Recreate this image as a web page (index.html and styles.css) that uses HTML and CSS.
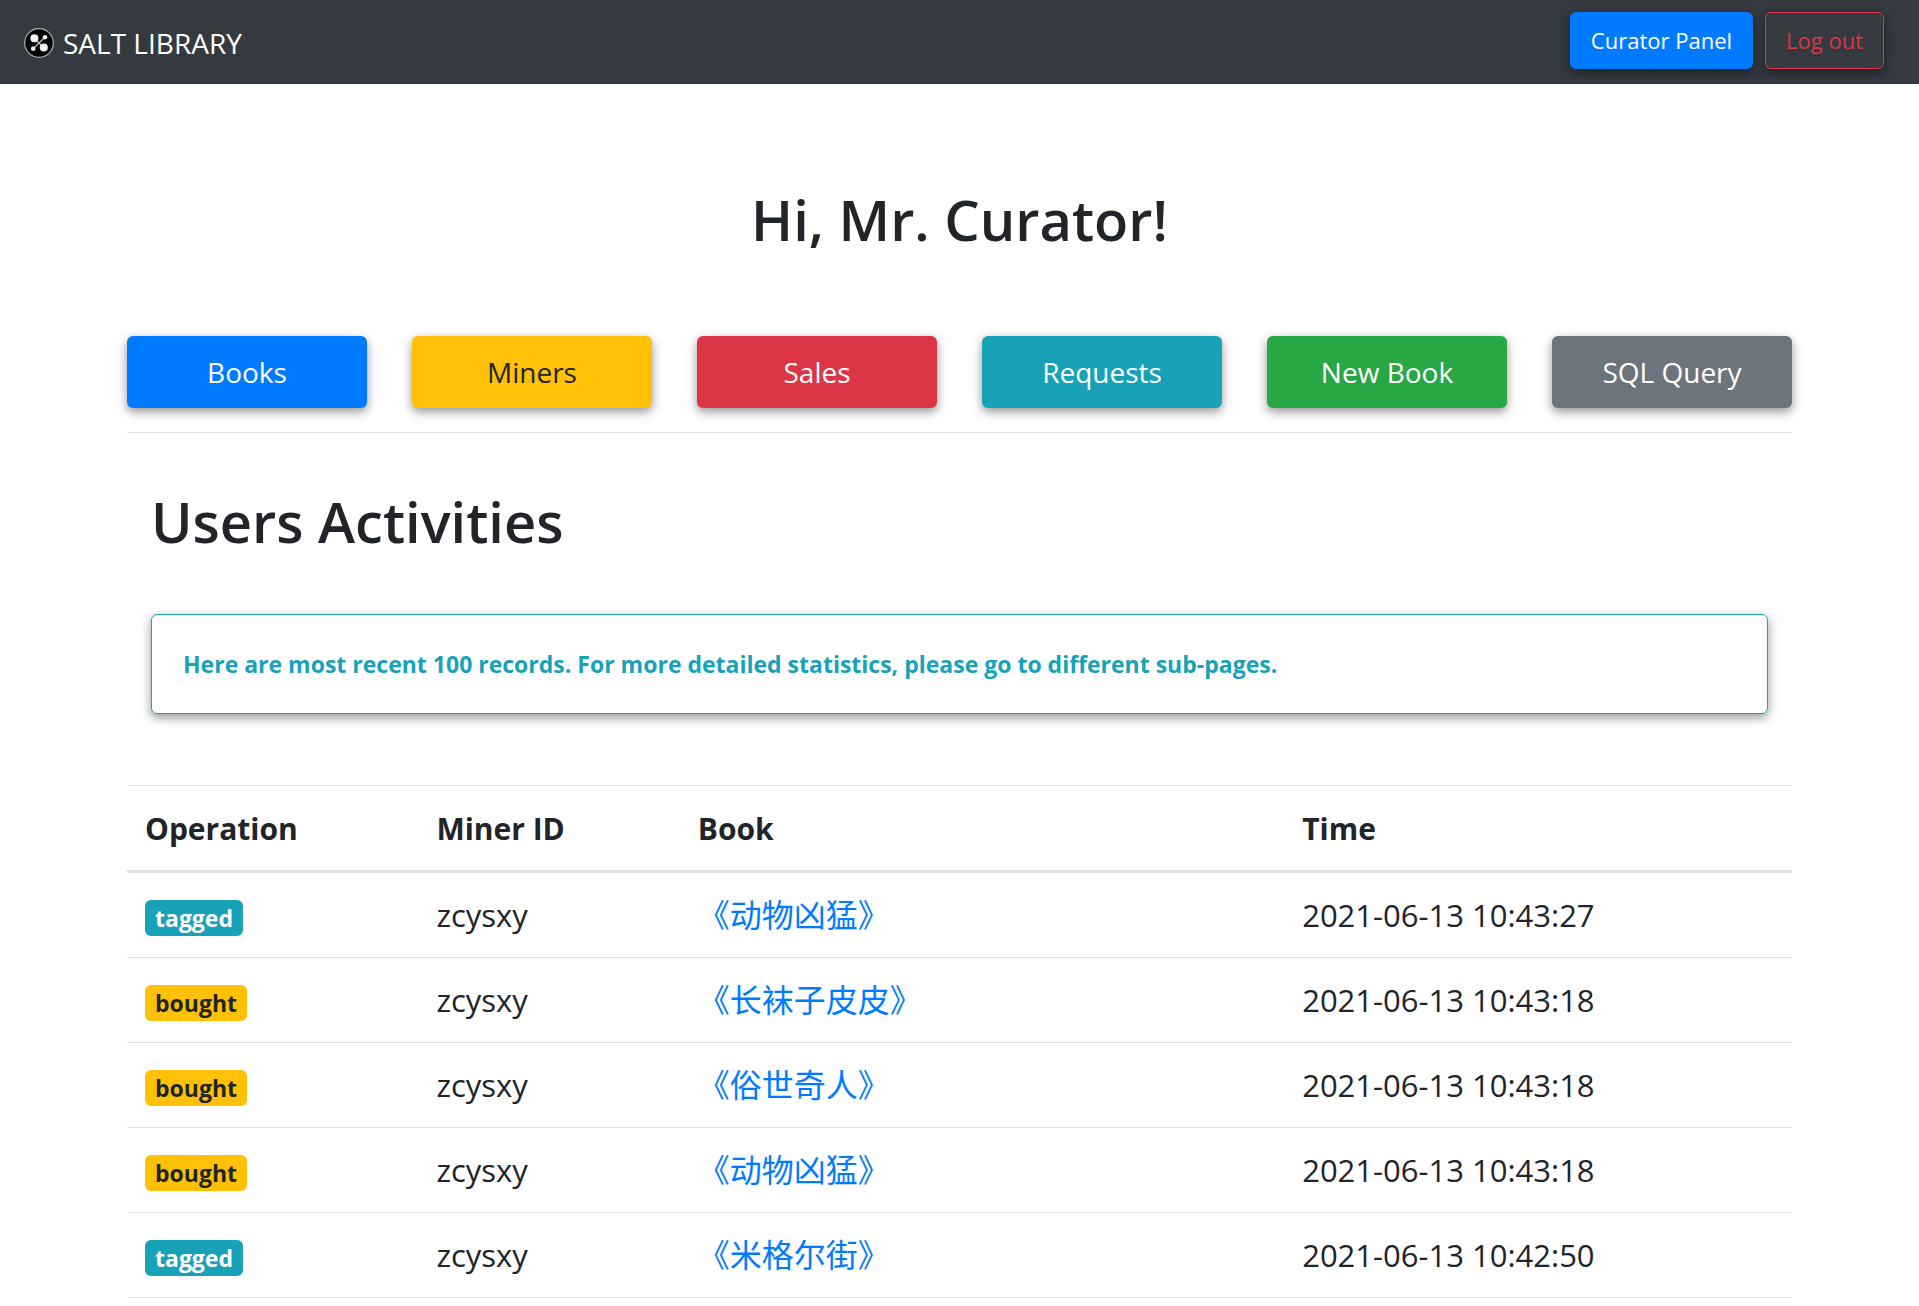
FILE: index.html
```html
<!DOCTYPE html>
<html lang="en">
<head>
  <meta charset="utf-8">
  <meta name="viewport" content="width=device-width, initial-scale=1">
  <title>Salt Library</title>
  <link rel="stylesheet" href="styles.css">
</head>
<body>
  <header class="navbar">
    <a class="brand" href="#">
      <svg class="brand-logo" viewBox="0 0 30 30" aria-hidden="true">
        <circle cx="15" cy="15" r="14.3" fill="#000" stroke="#a9adb0" stroke-width="1.2"/>
        <path d="M10.5 10.5 19.5 19.5M20.8 9.3 9.2 20.8" stroke="#b9bdbd" stroke-width="1.3"/>
        <circle cx="10.4" cy="10.2" r="4" fill="#f1f5f4"/>
        <circle cx="19.8" cy="19.6" r="4" fill="#f1f5f4"/>
        <circle cx="21" cy="9.2" r="2.3" fill="#f1f5f4"/>
        <circle cx="9.2" cy="20.8" r="2.3" fill="#f1f5f4"/>
      </svg>
      <span>SALT LIBRARY</span>
    </a>
    <nav class="actions">
      <button class="btn btn-primary" type="button">Curator Panel</button>
      <button class="btn btn-outline-danger" type="button">Log out</button>
    </nav>
  </header>

  <main class="container">
    <h1 class="title greeting">Hi, Mr. Curator!</h1>

    <div class="tiles">
      <button class="btn btn-lg btn-primary" type="button">Books</button>
      <button class="btn btn-lg btn-warning" type="button">Miners</button>
      <button class="btn btn-lg btn-danger" type="button">Sales</button>
      <button class="btn btn-lg btn-info" type="button">Requests</button>
      <button class="btn btn-lg btn-success" type="button">New Book</button>
      <button class="btn btn-lg btn-secondary" type="button">SQL Query</button>
    </div>

    <section class="activities">
      <h2 class="title">Users Activities</h2>
      <p class="notice">Here are most recent 100 records. For more detailed statistics, please go to different sub-pages.</p>
    </section>

    <table class="records">
      <thead>
        <tr>
          <th class="col-operation" scope="col">Operation</th>
          <th class="col-miner" scope="col">Miner ID</th>
          <th class="col-book" scope="col">Book</th>
          <th scope="col">Time</th>
        </tr>
      </thead>
      <tbody>
        <tr>
          <td><span class="badge badge-info">tagged</span></td>
          <td>zcysxy</td>
          <td><a class="book" lang="zh-CN" href="#">《动物凶猛》</a></td>
          <td>2021-06-13 10:43:27</td>
        </tr>
        <tr>
          <td><span class="badge badge-warning">bought</span></td>
          <td>zcysxy</td>
          <td><a class="book" lang="zh-CN" href="#">《长袜子皮皮》</a></td>
          <td>2021-06-13 10:43:18</td>
        </tr>
        <tr>
          <td><span class="badge badge-warning">bought</span></td>
          <td>zcysxy</td>
          <td><a class="book" lang="zh-CN" href="#">《俗世奇人》</a></td>
          <td>2021-06-13 10:43:18</td>
        </tr>
        <tr>
          <td><span class="badge badge-warning">bought</span></td>
          <td>zcysxy</td>
          <td><a class="book" lang="zh-CN" href="#">《动物凶猛》</a></td>
          <td>2021-06-13 10:43:18</td>
        </tr>
        <tr>
          <td><span class="badge badge-info">tagged</span></td>
          <td>zcysxy</td>
          <td><a class="book" lang="zh-CN" href="#">《米格尔街》</a></td>
          <td>2021-06-13 10:42:50</td>
        </tr>
      </tbody>
    </table>
  </main>
</body>
</html>
```
FILE: styles.css
```css
:root {
  --dark: #343a40;
  --text: #212529;
  --line: #dee2e6;
  --blue: #007bff;
  --yellow: #ffc107;
  --red: #dc3545;
  --teal: #17a2b8;
  --green: #28a745;
  --gray: #6c757d;
  --shadow: 0 4px 8px rgba(0, 0, 0, 0.32), 0 3px 15px rgba(0, 0, 0, 0.12);
}

* {
  box-sizing: border-box;
}

body {
  margin: 0;
  background: #fff;
  color: var(--text);
  font-family: "Open Sans", "Noto Sans CJK SC", sans-serif;
  font-size: 22px;
  line-height: 36px;
}

.navbar {
  display: flex;
  align-items: center;
  justify-content: space-between;
  padding: 12px 35px 15px 24px;
  background: var(--dark);
}

.brand {
  display: flex;
  align-items: center;
  gap: 9px;
  padding-top: 4px;
  color: #fff;
  font-size: 28px;
  text-decoration: none;
}

.brand-logo {
  width: 30px;
  height: 30px;
}

.actions {
  display: flex;
  gap: 12px;
}

.btn {
  padding: 9px 20px;
  border: 1px solid transparent;
  border-radius: 6px;
  box-shadow: var(--shadow);
  color: #fff;
  font: inherit;
  line-height: 37px;
  cursor: pointer;
}

.btn-lg {
  padding: 12px;
  font-size: 28px;
  line-height: 46px;
}

.btn-primary { background: var(--blue); }
.btn-warning { background: var(--yellow); color: var(--text); }
.btn-danger { background: var(--red); }
.btn-info { background: var(--teal); }
.btn-success { background: var(--green); }
.btn-secondary { background: var(--gray); }

.btn-outline-danger {
  border-color: var(--red);
  background: transparent;
  color: var(--red);
}

.container {
  max-width: 1713px;
  margin: 0 auto;
  padding: 0 24px;
}

.title {
  margin: 0;
  font-size: 56px;
  font-weight: 600;
  line-height: 72px;
}

.greeting {
  padding: 99px 0 81px;
  text-align: center;
}

.tiles {
  display: grid;
  grid-template-columns: repeat(6, 1fr);
  gap: 45px;
  padding-bottom: 24px;
  border-bottom: 1px solid #e2e2e2;
}

.activities {
  padding: 52px 24px 71px;
}

.notice {
  margin: 57px 0 0;
  padding: 31px;
  border: 1px solid var(--teal);
  border-radius: 6px;
  box-shadow: var(--shadow);
  color: var(--teal);
  font-size: 23px;
  font-weight: 700;
}

.records {
  width: 100%;
  border-collapse: separate;
  border-spacing: 0;
  border-top: 1px solid var(--line);
  table-layout: fixed;
  font-size: 31px;
  line-height: 48px;
}

.records th,
.records td {
  height: 85px;
  padding: 0 18px;
  border-bottom: 1px solid var(--line);
  text-align: left;
}

.records th {
  height: 87px;
  padding-top: 2px;
  border-bottom-width: 3px;
  font-size: 30px;
}

.col-operation { width: 17.5%; }
.col-miner { width: 15.7%; }
.col-book { width: 36.3%; }

.badge {
  display: inline-block;
  padding: 0 10px;
  border-radius: 6px;
  font-size: 23px;
  font-weight: 700;
  line-height: 36px;
}

.badge-info { background: var(--teal); color: #fff; }
.badge-warning { background: var(--yellow); }

.book {
  color: var(--blue);
  font-size: 32px;
  text-decoration: none;
}
```
